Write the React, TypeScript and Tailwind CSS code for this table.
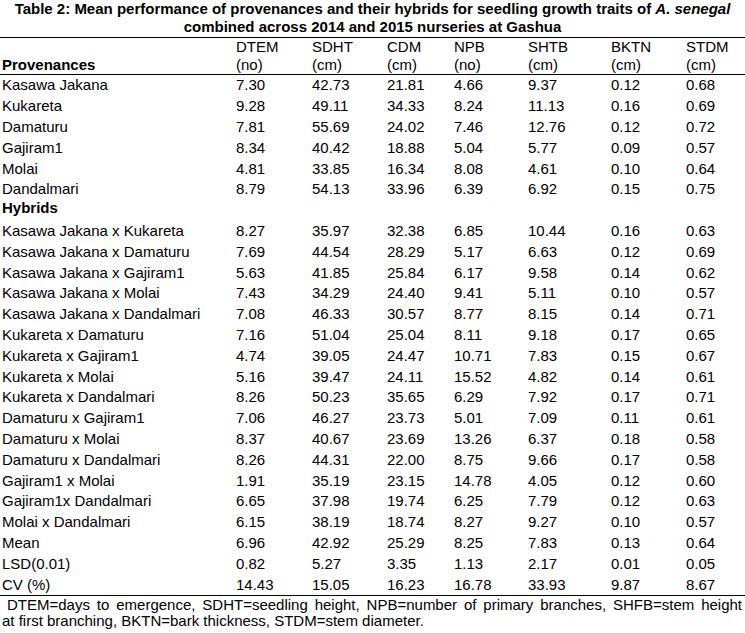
const provenances: [string, string[]][] = [
  ["Kasawa Jakana", ["7.30", "42.73", "21.81", "4.66", "9.37", "0.12", "0.68"]],
  ["Kukareta", ["9.28", "49.11", "34.33", "8.24", "11.13", "0.16", "0.69"]],
  ["Damaturu", ["7.81", "55.69", "24.02", "7.46", "12.76", "0.12", "0.72"]],
  ["Gajiram1", ["8.34", "40.42", "18.88", "5.04", "5.77", "0.09", "0.57"]],
  ["Molai", ["4.81", "33.85", "16.34", "8.08", "4.61", "0.10", "0.64"]],
  ["Dandalmari", ["8.79", "54.13", "33.96", "6.39", "6.92", "0.15", "0.75"]],
]

const hybrids: [string, string[]][] = [
  ["Kasawa Jakana x Kukareta", ["8.27", "35.97", "32.38", "6.85", "10.44", "0.16", "0.63"]],
  ["Kasawa Jakana x Damaturu", ["7.69", "44.54", "28.29", "5.17", "6.63", "0.12", "0.69"]],
  ["Kasawa Jakana x Gajiram1", ["5.63", "41.85", "25.84", "6.17", "9.58", "0.14", "0.62"]],
  ["Kasawa Jakana x Molai", ["7.43", "34.29", "24.40", "9.41", "5.11", "0.10", "0.57"]],
  ["Kasawa Jakana x Dandalmari", ["7.08", "46.33", "30.57", "8.77", "8.15", "0.14", "0.71"]],
  ["Kukareta x Damaturu", ["7.16", "51.04", "25.04", "8.11", "9.18", "0.17", "0.65"]],
  ["Kukareta x Gajiram1", ["4.74", "39.05", "24.47", "10.71", "7.83", "0.15", "0.67"]],
  ["Kukareta x Molai", ["5.16", "39.47", "24.11", "15.52", "4.82", "0.14", "0.61"]],
  ["Kukareta x Dandalmari", ["8.26", "50.23", "35.65", "6.29", "7.92", "0.17", "0.71"]],
  ["Damaturu x Gajiram1", ["7.06", "46.27", "23.73", "5.01", "7.09", "0.11", "0.61"]],
  ["Damaturu x Molai", ["8.37", "40.67", "23.69", "13.26", "6.37", "0.18", "0.58"]],
  ["Damaturu x Dandalmari", ["8.26", "44.31", "22.00", "8.75", "9.66", "0.17", "0.58"]],
  ["Gajiram1 x Molai", ["1.91", "35.19", "23.15", "14.78", "4.05", "0.12", "0.60"]],
  ["Gajiram1x Dandalmari", ["6.65", "37.98", "19.74", "6.25", "7.79", "0.12", "0.63"]],
  ["Molai x Dandalmari", ["6.15", "38.19", "18.74", "8.27", "9.27", "0.10", "0.57"]],
  ["Mean", ["6.96", "42.92", "25.29", "8.25", "7.83", "0.13", "0.64"]],
  ["LSD(0.01)", ["0.82", "5.27", "3.35", "1.13", "2.17", "0.01", "0.05"]],
  ["CV (%)", ["14.43", "15.05", "16.23", "16.78", "33.93", "9.87", "8.67"]],
]

const headers = [
  ["DTEM", "(no)"],
  ["SDHT", "(cm)"],
  ["CDM", "(cm)"],
  ["NPB", "(no)"],
  ["SHTB", "(cm)"],
  ["BKTN", "(cm)"],
  ["STDM", "(cm)"],
]

const cols = "grid grid-cols-[236px_76px_75px_67px_74px_83px_75px_1fr]"

function Row({ label, values }: { label: string; values: string[] }) {
  return (
    <div className={`${cols} h-[20.8px] items-center leading-[18px]`}>
      <div className="pl-[2px] whitespace-nowrap">{label}</div>
      {values.map((v, i) => (
        <div key={i} className="whitespace-nowrap">{v}</div>
      ))}
    </div>
  )
}

export default function App() {
  return (
    <div className="w-[745px] h-[633px] bg-white text-black font-['Liberation_Sans',Arial,sans-serif] text-[15px] overflow-hidden">
      {/* Caption */}
      <div className="text-center font-bold leading-[18px]">
        <div className="whitespace-nowrap">
          Table 2: Mean performance of provenances and their hybrids for seedling growth traits of <i>A. senegal</i>
        </div>
        <div>combined across 2014 and 2015 nurseries at Gashua</div>
      </div>

      {/* Header */}
      <div className="mt-[1px] border-t border-black" />
      <div className={`${cols} h-[36px] leading-[18px]`}>
        <div className="pl-[2px] font-bold self-end">Provenances</div>
        {headers.map(([a, b]) => (
          <div key={a}>
            <div>{a}</div>
            <div>{b}</div>
          </div>
        ))}
      </div>
      <div className="border-t border-black" />

      {/* Body */}
      {provenances.map(([l, v]) => (
        <Row key={l} label={l} values={v} />
      ))}
      <div className="h-[20.8px] pl-[2px] font-bold leading-[15px]">Hybrids</div>
      {hybrids.map(([l, v]) => (
        <Row key={l} label={l} values={v} />
      ))}
      <div className="border-t border-black" />

      {/* Footnote */}
      <div className="leading-[16px] pt-[1px]">
        <div className="pl-[7px] pr-[3px] text-justify [text-align-last:justify]">
          DTEM=days to emergence, SDHT=seedling height, NPB=number of primary branches, SHFB=stem height
        </div>
        <div className="pl-[2px]">at first branching, BKTN=bark thickness, STDM=stem diameter.</div>
      </div>
    </div>
  )
}
